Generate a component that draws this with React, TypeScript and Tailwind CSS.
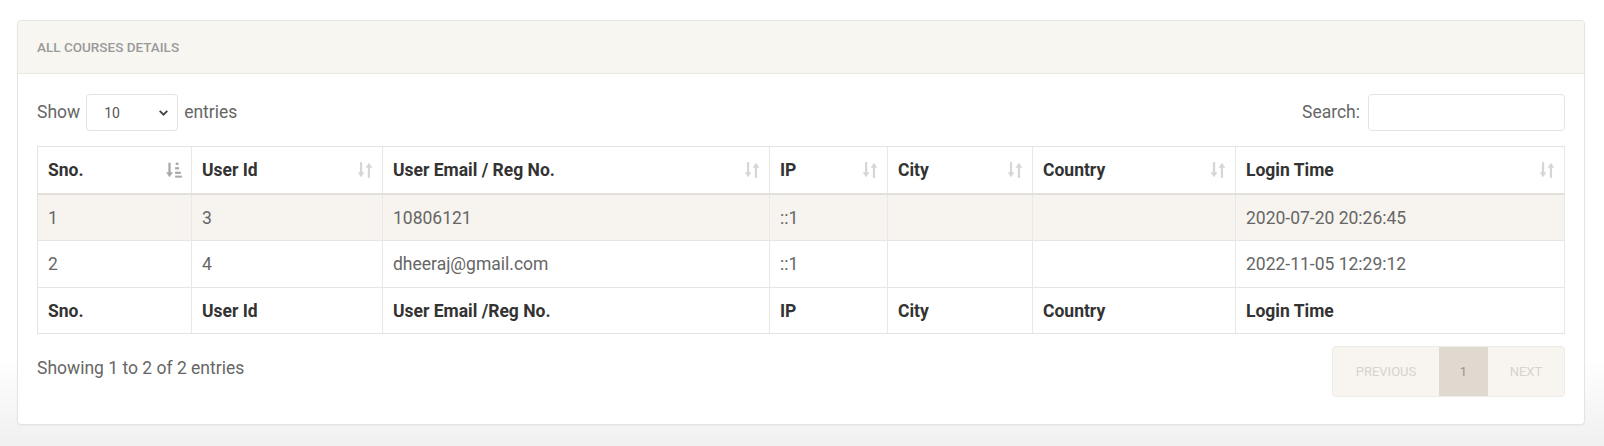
import React from 'react';

const COLUMNS = [
  { label: 'Sno.', foot: 'Sno.', width: 'w-[154px]', active: true },
  { label: 'User Id', foot: 'User Id', width: 'w-[191px]' },
  { label: 'User Email / Reg No.', foot: 'User Email /Reg No.', width: 'w-[387px]' },
  { label: 'IP', foot: 'IP', width: 'w-[118px]' },
  { label: 'City', foot: 'City', width: 'w-[145px]' },
  { label: 'Country', foot: 'Country', width: 'w-[203px]' },
  { label: 'Login Time', foot: 'Login Time', width: '' },
];

const ROWS = [
  ['1', '3', '10806121', '::1', '', '', '2020-07-20 20:26:45'],
  ['2', '4', 'dheeraj@gmail.com', '::1', '', '', '2022-11-05 12:29:12'],
];

/** Both-way sort glyph (down + up arrow) */
function SortIcon({ active }: { active?: boolean }) {
  if (active) {
    return (
      <svg width="18" height="18" viewBox="0 0 16 16" className="text-[#a8a8a8]">
        <path d="M4 1.5v10" stroke="currentColor" strokeWidth="2" />
        <path d="M1 10l3 4.5 3-4.5z" fill="currentColor" />
        <rect x="9.5" y="1.5" width="2.5" height="2" fill="currentColor" />
        <rect x="9" y="5.5" width="3.5" height="2" fill="currentColor" />
        <rect x="9" y="9.5" width="5" height="2" fill="currentColor" />
        <rect x="9" y="13" width="6" height="1.8" fill="currentColor" />
      </svg>
    );
  }
  return (
    <svg width="18" height="18" viewBox="0 0 16 16" className="text-[#d6d6d6]">
      <path d="M4.5 1v10" stroke="currentColor" strokeWidth="2" />
      <path d="M1.5 10l3 4.5 3-4.5z" fill="currentColor" />
      <path d="M11.5 15V5" stroke="currentColor" strokeWidth="2" />
      <path d="M8.5 6l3-4.5 3 4.5z" fill="currentColor" />
    </svg>
  );
}

export default function App() {
  return (
    <div
      className="min-h-[446px] w-full bg-gradient-to-b from-white from-80% to-[#f0f0f0] pl-[17px] pr-[19px] pt-[20px] pb-[21px]"
      style={{ fontFamily: 'Roboto, "Liberation Sans", sans-serif' }}
    >
      <div className="bg-white border border-[#e6e4e0] rounded-[4px] shadow-[0_1px_2px_rgba(0,0,0,0.04)] h-[405px] flex flex-col">
        {/* Header */}
        <div className="h-[53px] bg-[#f8f6f1] border-b border-[#ebe8e2] rounded-t-[4px] flex items-center px-[19px]">
          <span className="text-[13.5px] font-medium uppercase text-[#9a9a9a]">All Courses Details</span>
        </div>

        <div className="px-[19px] pt-[20px]">
          {/* Length + search */}
          <div className="flex items-center justify-between h-[37px]">
            <div className="flex items-center gap-[6px] text-[17.5px] text-[#666]">
              <span>Show</span>
              <div className="w-[92px] h-[37px] border border-[#e3e3e3] rounded-[4px] flex items-center justify-between pl-[17px] pr-[7px]">
                <span className="text-[14px] text-[#555] mt-[2px]">10</span>
                <svg width="13" height="13" viewBox="0 0 12 12">
                  <path d="M2.5 4.5L6 8l3.5-3.5" stroke="#444" strokeWidth="1.7" fill="none" />
                </svg>
              </div>
              <span>entries</span>
            </div>
            <div className="flex items-center gap-[8px] text-[17.5px] text-[#666]">
              <span>Search:</span>
              <div className="w-[197px] h-[37px] border border-[#e3e3e3] rounded-[4px]" />
            </div>
          </div>

          {/* Table */}
          <table className="mt-[15px] w-full border-collapse border border-[#e3e3e3] table-fixed">
            <thead>
              <tr className="h-[47px] border-b-2 border-[#e3e0db]">
                {COLUMNS.map((c) => (
                  <th key={c.label} className={`${c.width} border-r border-[#e8e8e8] pl-[10px] pr-[8px] text-left font-bold text-[17.5px] text-[#333]`}>
                    <div className="flex items-center justify-between">
                      <span>{c.label}</span>
                      <SortIcon active={c.active} />
                    </div>
                  </th>
                ))}
              </tr>
            </thead>
            <tbody>
              {ROWS.map((r, i) => (
                <tr key={i} className={`h-[47px] border-b border-[#e8e6e2] ${i === 0 ? 'bg-[#f7f4ef]' : 'bg-white'}`}>
                  {r.map((v, j) => (
                    <td key={j} className="border-r border-[#e8e8e8] pl-[10px] pt-[1px] text-[17.5px] text-[#666]">{v}</td>
                  ))}
                </tr>
              ))}
            </tbody>
            <tfoot>
              <tr className="h-[46px]">
                {COLUMNS.map((c) => (
                  <th key={c.foot} className="border-r border-[#e8e8e8] pl-[10px] pt-[1px] text-left font-bold text-[17.5px] text-[#333]">{c.foot}</th>
                ))}
              </tr>
            </tfoot>
          </table>

          {/* Info + pagination */}
          <div className="flex items-start justify-between mt-[12px]">
            <span className="text-[17.5px] text-[#666] mt-[9px]">Showing 1 to 2 of 2 entries</span>
            <div className="flex h-[51px] border border-[#efebe5] rounded-[4px] bg-[#f8f5f0] text-[13px] uppercase">
              <span className="w-[106px] flex items-center justify-center text-[#d6d2cc]">Previous</span>
              <span className="w-[49px] flex items-center justify-center bg-[#e0d9cf] text-[#9a948c] text-[13px]">1</span>
              <span className="flex-1 w-[76px] flex items-center justify-center text-[#d6d2cc]">Next</span>
            </div>
          </div>
        </div>
      </div>
    </div>
  );
}
